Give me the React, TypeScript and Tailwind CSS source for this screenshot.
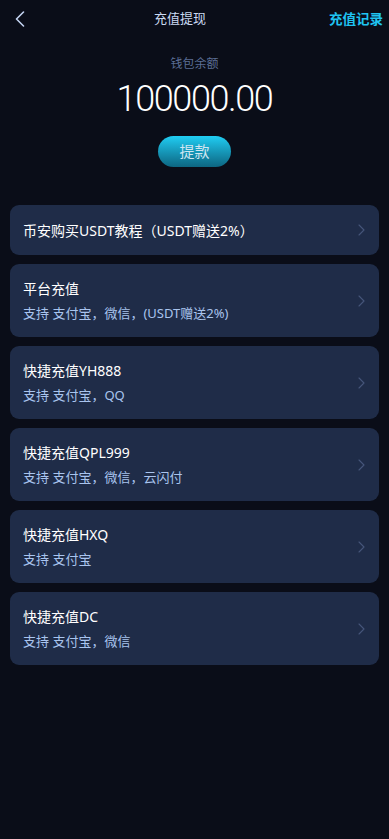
const channels = [
  { title: "平台充值", desc: "支持 支付宝，微信，(USDT赠送2%)" },
  { title: "快捷充值YH888", desc: "支持 支付宝，QQ" },
  { title: "快捷充值QPL999", desc: "支持 支付宝，微信，云闪付" },
  { title: "快捷充值HXQ", desc: "支持 支付宝" },
  { title: "快捷充值DC", desc: "支持 支付宝，微信" },
];

function Arrow() {
  return (
    <svg width="7" height="12" viewBox="0 0 7 12" fill="none" className="shrink-0">
      <polyline points="1,1 6,6 1,11" stroke="#46567a" strokeWidth="1.1" strokeLinecap="round" strokeLinejoin="round" />
    </svg>
  );
}

export default function App() {
  return (
    <div
      className="min-h-screen w-full bg-[#0a0d18] text-white"
      style={{ fontFamily: '"Noto Sans", "Noto Sans CJK SC", sans-serif' }}
    >
      {/* header */}
      <div className="flex h-[38px] items-center pl-[15px] pr-[6px]">
        <svg width="10" height="16" viewBox="0 0 10 16" fill="none" className="shrink-0">
          <polyline points="8.5,1 1.5,8 8.5,15" stroke="#c3d2f0" strokeWidth="1.6" strokeLinecap="round" strokeLinejoin="round" />
        </svg>
        <div className="ml-[129px] text-[13px] text-[#cbd9f2]">充值提现</div>
        <div className="ml-auto text-[13.5px] font-bold text-[#1fc4f2]">充值记录</div>
      </div>

      {/* balance */}
      <div className="mt-[18px] flex flex-col items-center">
        <div className="text-[12px] leading-[16px] text-[#5b6d95]">钱包余额</div>
        <div
          className="mt-[5px] text-[36px] font-light leading-[44px] tracking-[-1.4px] text-white"
          style={{ fontFamily: "Roboto, sans-serif" }}
        >
          100000.00
        </div>
        <button className="mt-[15px] h-[31px] w-[73px] rounded-full bg-gradient-to-b from-[#20cdf3] to-[#0d6682] text-[15px] text-[#cfe6f2]">
          提款
        </button>
      </div>

      {/* channels */}
      <div className="mt-[38px] flex flex-col gap-[9px] px-[10px]">
        <div className="flex h-[50px] items-center justify-between rounded-[9px] bg-[#1f2c48] pl-[13px] pr-[14px]">
          <span className="text-[14px] text-white">币安购买USDT教程（USDT赠送2%）</span>
          <Arrow />
        </div>
        {channels.map((c) => (
          <div
            key={c.title}
            className="flex h-[73px] items-center justify-between rounded-[9px] bg-[#1f2c48] pl-[13px] pr-[14px]"
          >
            <div className="flex flex-col gap-[4px]">
              <span className="text-[14px] leading-[20px] text-white">{c.title}</span>
              <span className="text-[13px] leading-[20px] text-[#a9c4ee]">{c.desc}</span>
            </div>
            <Arrow />
          </div>
        ))}
      </div>
    </div>
  );
}
